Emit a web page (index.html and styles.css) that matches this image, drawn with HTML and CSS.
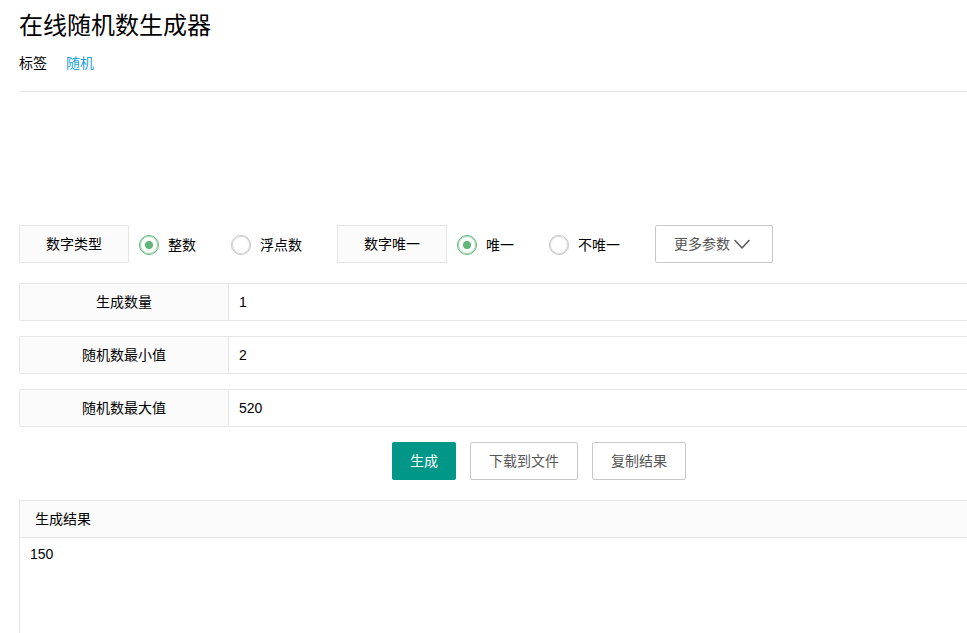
FILE: index.html
```html
<!DOCTYPE html>
<html lang="zh-CN">
<head>
    <meta charset="UTF-8">
    <meta name="viewport" content="width=device-width, initial-scale=1.0">
    <title>在线随机数生成器</title>
    <link rel="stylesheet" href="styles.css">
</head>
<body>
    <header class="page-header">
        <h1 class="title">在线随机数生成器</h1>
        <div class="tags">
            <span>标签</span>
            <a href="#">随机</a>
        </div>
    </header>

    <form id="random-form" class="form">
        <!-- 选项 -->
        <div class="options">
            <div class="option-group" role="radiogroup" aria-labelledby="type-label">
                <span class="option-label" id="type-label">数字类型</span>
                <label class="radio"><input type="radio" name="type" value="int" checked>整数</label>
                <label class="radio"><input type="radio" name="type" value="float">浮点数</label>
            </div>
            <div class="option-group" role="radiogroup" aria-labelledby="unique-label">
                <span class="option-label" id="unique-label">数字唯一</span>
                <label class="radio"><input type="radio" name="unique" value="1" checked>唯一</label>
                <label class="radio"><input type="radio" name="unique" value="0">不唯一</label>
            </div>
            <button type="button" class="btn btn-more">
                更多参数
                <svg class="arrow" width="16" height="16" viewBox="0 0 16 16" aria-hidden="true">
                    <path d="M1 4.5L8 12L15 4.5" fill="none" stroke="currentColor" stroke-width="1.5" stroke-linecap="round"/>
                </svg>
            </button>
        </div>

        <!-- 参数 -->
        <div class="fields">
            <div class="field">
                <label for="count">生成数量</label>
                <input type="text" id="count" value="1">
            </div>
            <div class="field">
                <label for="min">随机数最小值</label>
                <input type="text" id="min" value="2">
            </div>
            <div class="field">
                <label for="max">随机数最大值</label>
                <input type="text" id="max" value="520">
            </div>
        </div>

        <div class="actions">
            <button type="button" class="btn btn-primary">生成</button>
            <button type="button" class="btn">下载到文件</button>
            <button type="button" class="btn">复制结果</button>
        </div>

        <!-- 结果 -->
        <div class="result">
            <label class="result-title" for="result">生成结果</label>
            <textarea id="result">150</textarea>
        </div>
    </form>
</body>
</html>
```

FILE: styles.css
```css
* {
    box-sizing: border-box;
}

body {
    display: flex;
    flex-direction: column;
    min-height: 100vh;
    margin: 0;
    padding-left: 19px;
    background-color: #fff;
    color: #000;
    font-family: "Liberation Sans", "Noto Sans CJK SC", sans-serif;
    font-size: 14px;
    line-height: 24px;
}

button, input, textarea {
    margin: 0;
    color: inherit;
    font: inherit;
}

.page-header {
    padding: 8px 0 16px;
    border-bottom: 1px solid #e6e6e6;
}

.title {
    margin: 0 0 7px;
    font-size: 24px;
    font-weight: normal;
    line-height: 36px;
}

.tags {
    display: flex;
    gap: 19px;
}

.tags a {
    color: #1b9fd8;
    text-decoration: none;
}

.form {
    display: flex;
    flex-direction: column;
    flex-grow: 1;
    padding-top: 133px;
}

.options {
    display: flex;
    flex-wrap: wrap;
    gap: 15px 35px;
    margin-bottom: 20px;
}

.option-group {
    display: flex;
    align-items: center;
    gap: 35px;
}

.option-label {
    width: 110px;
    height: 38px;
    margin-right: -25px;
    border: 1px solid #e6e6e6;
    background-color: #fbfbfb;
    line-height: 36px;
    text-align: center;
}

.radio {
    display: flex;
    align-items: center;
    gap: 9px;
    padding-top: 2px;
    cursor: pointer;
}

.radio input {
    display: grid;
    place-items: center;
    width: 20px;
    height: 20px;
    border: 1px solid #c2c2c2;
    border-radius: 50%;
    box-shadow: inset 0 0 0 1px #dcdcdc;
    appearance: none;
    cursor: pointer;
}

.radio input:checked {
    border-color: #5fb878;
    box-shadow: inset 0 0 0 1px #a5d6b3;
}

.radio input:checked::before {
    content: "";
    width: 8px;
    height: 8px;
    border-radius: 50%;
    background-color: #5fb878;
}

.btn {
    height: 38px;
    padding: 0 18px;
    border: 1px solid #c9c9c9;
    border-radius: 2px;
    background-color: #fff;
    color: #555;
    line-height: 36px;
    cursor: pointer;
}

.btn:hover {
    border-color: #009688;
}

.btn-primary {
    border: none;
    background-color: #009688;
    color: #fff;
}

.btn-more {
    display: flex;
    align-items: center;
    gap: 4px;
    padding-right: 22px;
}

.fields {
    display: flex;
    flex-direction: column;
    gap: 15px;
}

.field {
    display: flex;
    height: 38px;
    border: 1px solid #e6e6e6;
    border-right: none;
    border-radius: 2px 0 0 2px;
}

.field label {
    width: 209px;
    border-right: 1px solid #e6e6e6;
    background-color: #fbfbfb;
    line-height: 36px;
    text-align: center;
}

.field input {
    flex: 1;
    min-width: 0;
    padding: 0 10px;
    border: none;
    outline: none;
}

.actions {
    display: flex;
    justify-content: center;
    gap: 14px;
    padding: 15px 0 20px 92px;
}

.result {
    display: flex;
    flex-direction: column;
    flex-grow: 1;
    border: 1px solid #e6e6e6;
    border-width: 1px 0 0 1px;
}

.result-title {
    padding: 0 15px;
    border-bottom: 1px solid #e6e6e6;
    background-color: #fbfbfb;
    line-height: 36px;
}

.result textarea {
    flex-grow: 1;
    width: 100%;
    min-height: 90px;
    padding: 4px 10px;
    border: none;
    outline: none;
    resize: none;
}
```
